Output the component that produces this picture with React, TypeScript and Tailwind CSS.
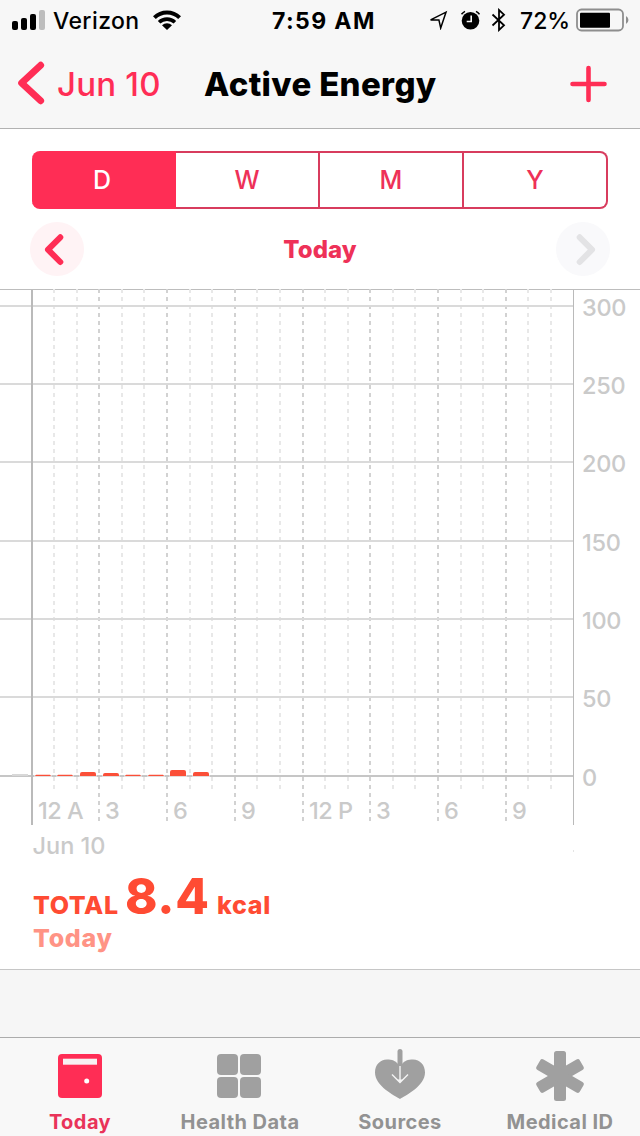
import React from 'react';

const GRID_Y = [
  { label: '300', y: 306 },
  { label: '250', y: 384 },
  { label: '200', y: 462 },
  { label: '150', y: 541 },
  { label: '100', y: 619 },
  { label: '50', y: 697 },
];

const HOURS = [
  54, 77, 99, 122, 144, 167, 190, 212, 235, 257, 280, 303, 325, 348, 370, 393, 415, 438, 461, 483, 506, 528, 551,
];

const HOUR_LABELS = [
  { label: '12 A', x: 38 },
  { label: '3', x: 105 },
  { label: '6', x: 173 },
  { label: '9', x: 241 },
  { label: '12 P', x: 309 },
  { label: '3', x: 376 },
  { label: '6', x: 444 },
  { label: '9', x: 512 },
];

const BARS = [
  { x: 35, h: 1 },
  { x: 57, h: 1 },
  { x: 80, h: 3 },
  { x: 103, h: 2 },
  { x: 125, h: 1 },
  { x: 148, h: 1 },
  { x: 170, h: 5 },
  { x: 193, h: 3 },
];

const StatusBar = () => (
  <div className="flex h-10 items-center text-[23px] leading-[38px] text-black">
    <div className="flex w-[272px] items-center pl-3">
      <svg width="34" height="20" viewBox="0 0 34 20">
        <rect x="0" y="11" width="6" height="9" rx="2" />
        <rect x="9" y="8" width="6" height="12" rx="2" />
        <rect x="18" y="4" width="6" height="16" rx="2" />
        <rect x="27" y="0" width="6" height="20" rx="2" fill="#bdbdbd" />
      </svg>
      <span className="ml-[7px] w-[100px] pt-0.5 font-medium tracking-[0.4px]">Verizon</span>
      <svg width="28" height="20" viewBox="0 0 28 20" fill="none" stroke="#000" strokeWidth="4">
        <path d="M1.4 7.6a18 18 0 0 1 25.2 0" />
        <path d="M6.1 12.3a11.3 11.3 0 0 1 15.8 0" strokeWidth="3.6" />
        <path d="M9 15.3a7.2 7.2 0 0 1 10 0L14 20z" fill="#000" stroke="none" />
      </svg>
    </div>
    <span className="w-[156px] pt-0.5 font-bold tracking-[1.4px]">7:59 AM</span>
    <svg className="shrink-0" width="20" height="20" viewBox="0 0 20 20" fill="none" stroke="#000" strokeWidth="1.5" strokeLinejoin="miter">
      <path d="M2.6 9.9 18 2.2 12.7 18 10.9 9.9z" />
    </svg>
    <svg className="ml-3 shrink-0" width="20" height="20" viewBox="0 0 20 20">
      <circle cx="10.5" cy="10.8" r="8.8" />
      <path d="M1.5 4.3A10 10 0 0 1 5 1.3M16 1.3A10 10 0 0 1 19.5 4.3" fill="none" stroke="#000" strokeWidth="1.5" />
      <path d="M11.2 5.5v6H6.7" fill="none" stroke="#f7f7f7" strokeWidth="1.6" />
    </svg>
    <svg className="ml-[11px] shrink-0" width="16" height="24" viewBox="0 0 16 24" fill="none" stroke="#000" strokeWidth="1.8">
      <path d="M1.5 6.5 13 17.3 8 22V2l5 4.7L1.5 17.5" />
    </svg>
    <span className="ml-[13px] w-[56px] shrink-0 pt-0.5 font-medium">72%</span>
    <svg className="shrink-0" width="54" height="24" viewBox="0 0 54 24">
      <rect x="1" y="1.5" width="46" height="21" rx="4.5" fill="none" stroke="#8e8e8e" strokeWidth="1.8" />
      <rect x="4" y="4.8" width="30" height="15" rx="1" />
      <path d="M50 8a4.5 4.5 0 0 1 0 8z" fill="#8e8e8e" />
    </svg>
  </div>
);

const NavBar = () => (
  <div className="flex h-[89px] items-center border-b border-[#b2b2b2]">
    <svg className="ml-[17px] shrink-0" width="28" height="46" viewBox="0 0 28 46" fill="none" stroke="#ff2d55" strokeWidth="6.8" strokeLinecap="round" strokeLinejoin="round">
      <path d="M23.7 4.2 4.6 22 23.7 39.8" />
    </svg>
    <span className="ml-3 w-[147px] pt-0.5 text-[33px] font-medium tracking-[0.2px] text-[#ff2d55]">Jun 10</span>
    <h1 className="w-[366px] pt-0.5 text-[33px] font-extrabold tracking-[0.35px] text-black">Active Energy</h1>
    <svg className="shrink-0" width="38" height="38" viewBox="0 0 38 38" stroke="#ff2d55" strokeWidth="4.6" strokeLinecap="round">
      <path d="M18.5 3v32M2.5 19h32" />
    </svg>
  </div>
);

const RangePicker = () => (
  <div className="mx-8 mt-[22px] grid h-[58px] grid-cols-[144px_142px_146px_144px] text-center text-[25px] font-medium leading-[54px] text-[#ee3158]">
    <button className="rounded-l-lg border-y-2 border-[#ff2d55] bg-[#ff2d55] pr-1 text-white">D</button>
    <button className="border-y-2 border-[#d83c5e]">W</button>
    <button className="border-2 border-[#d83c5e]">M</button>
    <button className="rounded-r-lg border-y-2 border-r-2 border-[#d83c5e]">Y</button>
  </div>
);

const DayPager = () => (
  <div className="flex h-20 items-center justify-between px-[30px]">
    <button className="flex h-[54px] w-[54px] items-center justify-center rounded-full bg-[#fff3f5]">
      <svg width="54" height="54" viewBox="0 0 54 54" fill="none" stroke="#ff2d55" strokeWidth="6" strokeLinecap="round" strokeLinejoin="round">
        <path d="M30.3 15.3 18 27.7 30.3 40" />
      </svg>
    </button>
    <span className="pt-0.5 text-2xl font-extrabold tracking-[0.1px] text-[#ee3158]">Today</span>
    <button className="flex h-[54px] w-[54px] items-center justify-center rounded-full bg-[#f9f9fb]">
      <svg width="54" height="54" viewBox="0 0 54 54" fill="none" stroke="#e3e3e5" strokeWidth="6" strokeLinecap="round" strokeLinejoin="round">
        <path d="M23.7 15.3 36 27.7 23.7 40" />
      </svg>
    </button>
  </div>
);

const EnergyChart = () => (
  <svg className="block font-medium" width="640" height="580" viewBox="0 289 640 580" fontSize="23.5" fill="#cacaca">
    <rect x="0" y="289" width="640" height="1" fill="#bdbdbd" />
    {HOURS.map((x, i) => {
      const major = i % 3 === 2;
      return (
        <line key={x} x1={x} x2={x} y1="289" y2={major ? 822 : 789} stroke={major ? '#d2d2d2' : '#e8e8e8'} strokeWidth="2" strokeDasharray="4 4" />
      );
    })}
    {GRID_Y.map(({ label, y }) => (
      <g key={label}>
        <rect x="0" y={y - 1} width="573" height="2" fill="#dadada" />
        <text x="582" y={y + 10} letterSpacing="-0.3">{label}</text>
      </g>
    ))}
    <rect x="0" y="775" width="573" height="2" fill="#c6c6c6" />
    <text x="582" y="786">0</text>
    <rect x="31" y="290" width="2" height="535" fill="#bababa" />
    <rect x="573" y="290" width="1" height="535" fill="#bababa" />
    <rect x="573" y="850" width="1" height="2" fill="#e4e4e4" />
    <rect x="12" y="774" width="16" height="2" fill="#d8d8d8" />
    {BARS.map(({ x, h }) => (
      <g key={x}>
        <rect x={x - 1} y="775" width="18" height="2" fill="#e4dcdb" />
        <path
          d={h > 1 ? `M${x} 776v${1 - h}q0-2 2-2h12q2 0 2 2v${h - 1}z` : `M${x} 776l1-1.3h14l1 1.3z`}
          fill="#fb4f38"
        />
      </g>
    ))}
    {HOUR_LABELS.map(({ label, x }) => (
      <text key={x} x={x} y="819" letterSpacing="-0.5">{label}</text>
    ))}
    <text x="32.5" y="854">Jun 10</text>
  </svg>
);

const Total = () => (
  <div className="h-[100px] pl-[33px] font-extrabold text-[#ff4b33]">
    <div className="flex h-[56px] items-baseline whitespace-pre text-[25px] leading-[56px]">
      <span className="w-[92px] tracking-[0.6px]">TOTAL</span>
      <span className="w-[92px] text-[49px] tracking-[0.7px]">8.4</span>
      <span className="tracking-[0.7px]">kcal</span>
    </div>
    <div className="text-[25px] leading-[27px] tracking-[0.7px] text-[#ff9385]">Today</div>
  </div>
);

const TabBar = () => (
  <div className="grid h-[99px] grid-cols-4 border-t border-[#acacac] bg-[#f8f8f8] text-center text-xl font-bold leading-6 tracking-[0.45px] text-[#929292]">
    <div className="flex flex-col items-center text-[#e93359]">
      <svg className="mt-2.5" width="60" height="60" viewBox="0 0 60 60">
        <rect x="8" y="6" width="44" height="44" rx="4" fill="#ff2d55" />
        <rect x="13" y="10.7" width="34" height="6" fill="#f7f1f2" />
        <circle cx="36.7" cy="33" r="2.5" fill="#fff" />
      </svg>
      <span className="mt-[2px]">Today</span>
    </div>
    <div className="flex flex-col items-center">
      <svg className="mt-2.5" width="60" height="60" viewBox="0 0 60 60" fill="#a0a0a0">
        <rect x="7" y="6" width="21" height="21" rx="4" />
        <rect x="30" y="6" width="21" height="21" rx="4" />
        <rect x="7" y="29" width="21" height="21" rx="4" />
        <rect x="30" y="29" width="21" height="21" rx="4" />
      </svg>
      <span className="mt-[2px]">Health Data</span>
    </div>
    <div className="flex flex-col items-center">
      <svg className="mt-2.5" width="60" height="60" viewBox="0 0 60 60" fill="#a0a0a0">
        <path d="M30 51C25 48 5 38 5 24.5C5 17 10 11.5 17 11.5C22 11.5 26 13 27.2 15.5H32.8C34 13 38 11.5 43 11.5C50 11.5 55 17 55 24.5C55 38 35 48 30 51Z" />
        <path d="M27.5 16V3.5a2.5 2.5 0 0 1 5 0V16z" />
        <path d="M30 18V33M22 26.5 30 34.5 38 26.5" fill="none" stroke="#f4f4f4" strokeWidth="1.4" />
        <path d="M27 31.5h6L30 34.8z" fill="#f4f4f4" />
      </svg>
      <span className="mt-[2px]">Sources</span>
    </div>
    <div className="flex flex-col items-center">
      <svg className="mt-2.5" width="60" height="60" viewBox="0 0 60 60" fill="#a0a0a0">
        <rect x="24" y="3" width="12" height="50" rx="2.5" />
        <rect x="24" y="3" width="12" height="50" rx="2.5" transform="rotate(60 30 28)" />
        <rect x="24" y="3" width="12" height="50" rx="2.5" transform="rotate(-60 30 28)" />
      </svg>
      <span className="mt-[2px]">Medical ID</span>
    </div>
  </div>
);

const App = () => {
  return (
    <div className="flex h-[1136px] w-[640px] flex-col overflow-hidden bg-[#f6f6f6] font-['Inter',sans-serif]">
      <header className="bg-[#f7f7f7]">
        <StatusBar />
        <NavBar />
      </header>
      <main className="flow-root h-[841px] border-b border-[#c6c6c6] bg-white">
        <RangePicker />
        <DayPager />
        <EnergyChart />
        <Total />
      </main>
      <footer className="mt-auto">
        <TabBar />
      </footer>
    </div>
  );
};

export default App;
